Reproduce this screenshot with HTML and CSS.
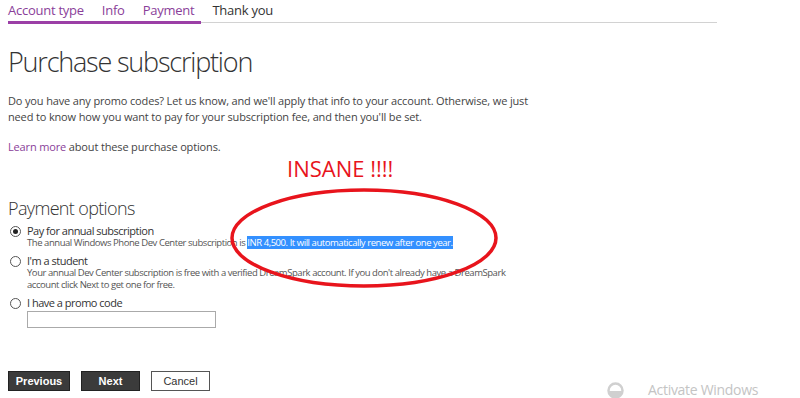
FILE: index.html
```html
<!DOCTYPE html>
<html>
<head>
<meta charset="utf-8">
<link rel="stylesheet" href="styles.css">
</head>
<body>
<div class="page">
  <nav class="tabs">
    <span class="tab done">Account type</span>
    <span class="tab done">Info</span>
    <span class="tab done">Payment</span>
    <span class="tab">Thank you</span>
  </nav>
  <div class="tabline"><div class="tabline-fill"></div></div>

  <h1 class="title">Purchase subscription</h1>
  <p class="intro">Do you have any promo codes? Let us know, and we'll apply that info to your account. Otherwise, we just need to know how you want to pay for your subscription fee, and then you'll be set.</p>
  <p class="learn"><a class="link">Learn more</a> about these purchase options.</p>

  <div class="insane">INSANE !!!!</div>

  <h2 class="subtitle">Payment options</h2>
  <div class="options">
    <div class="option">
      <span class="radio checked"></span>
      <div class="opt-body">
        <div class="opt-label">Pay for annual subscription</div>
        <div class="opt-desc">The annual Windows Phone Dev Center subscription is <span class="sel">INR 4,500. It will automatically renew after one year.</span></div>
      </div>
    </div>
    <div class="option">
      <span class="radio"></span>
      <div class="opt-body">
        <div class="opt-label">I'm a student</div>
        <div class="opt-desc narrow">Your annual Dev Center subscription is free with a verified DreamSpark account. If you don't already have a DreamSpark account click Next to get one for free.</div>
      </div>
    </div>
    <div class="option">
      <span class="radio"></span>
      <div class="opt-body">
        <div class="opt-label">I have a promo code</div>
        <div class="promo"></div>
      </div>
    </div>
  </div>

  <div class="buttons">
    <span class="btn dark">Previous</span>
    <span class="btn dark next">Next</span>
    <span class="btn light">Cancel</span>
  </div>

  <svg class="ellipse" width="280" height="110" viewBox="0 0 280 110">
    <ellipse cx="140" cy="55" rx="132" ry="48" fill="none" stroke="#e8141c" stroke-width="3.5"/>
  </svg>

  <div class="activate">
    <svg class="act-icon" width="17" height="17" viewBox="0 0 17 17">
      <circle cx="8.5" cy="8.5" r="7" fill="none" stroke="#d0d0d0" stroke-width="2.5"/>
      <path d="M2 9 H15 A6.5 6.5 0 0 1 2 9 Z" fill="#d0d0d0"/>
    </svg>
    <span>Activate Windows</span>
  </div>
</div>
</body>
</html>
```

FILE: styles.css
```css
html, body {
  margin: 0;
  padding: 0;
  background: #fff;
}
body {
  width: 800px;
  height: 398px;
  overflow: hidden;
  font-family: "Open Sans", "Noto Sans", sans-serif;
  color: #444;
}
.page {
  position: relative;
  padding: 0 8px;
  height: 398px;
}
.tabs {
  display: flex;
  gap: 18px;
  font-size: 13px;
  letter-spacing: -0.25px;
  line-height: 20px;
  color: #333;
}
.tab.done {
  color: #8a3e99;
}
.tabline {
  margin-top: 2px;
  width: 709px;
  height: 1px;
  background: #d2d2d2;
  position: relative;
}
.tabline-fill {
  position: absolute;
  left: 0;
  top: -1px;
  width: 193px;
  height: 3px;
  background: #9b3fa6;
}
.title {
  margin: 22px 0 0;
  font-weight: 300;
  font-size: 27px;
  line-height: 34px;
  color: #333;
  letter-spacing: -1.2px;
}
.intro {
  margin: 14px 0 0;
  font-size: 11px;
  letter-spacing: -0.15px;
  line-height: 16px;
  width: 528px;
}
.learn {
  margin: 14px 0 0;
  font-size: 11px;
  letter-spacing: -0.15px;
  line-height: 16px;
}
.link {
  color: #8a3e99;
}
.insane {
  margin: 0 0 0 279px;
  font-family: "Open Sans", sans-serif;
  font-size: 22px;
  line-height: 26px;
  color: #e8141c;
}
.subtitle {
  margin: 15px 0 0;
  font-weight: 300;
  font-size: 18px;
  letter-spacing: -0.65px;
  line-height: 24px;
  color: #333;
}
.options {
  display: flex;
  flex-direction: column;
  gap: 6px;
  margin-top: 5px;
}
.option {
  display: flex;
  gap: 6px;
  padding-left: 2px;
}
.radio {
  width: 9px;
  height: 9px;
  border: 1px solid #555;
  border-radius: 50%;
  margin-top: 1px;
  flex: none;
  position: relative;
}
.radio.checked::after {
  content: "";
  position: absolute;
  left: 2px;
  top: 2px;
  width: 5px;
  height: 5px;
  border-radius: 50%;
  background: #222;
}
.opt-label {
  font-size: 11px;
  letter-spacing: -0.5px;
  line-height: 12px;
  color: #333;
}
.opt-desc {
  font-size: 9.5px;
  letter-spacing: -0.45px;
  line-height: 12px;
  color: #555;
}
.opt-desc.narrow {
  width: 500px;
}
.sel {
  background: #3390ff;
  color: #fff;
}
.promo {
  margin-top: 2px;
  width: 187px;
  height: 15px;
  border: 1px solid #aaa;
}
.buttons {
  display: flex;
  gap: 11px;
  margin-top: 43px;
}
.btn {
  font-family: "Liberation Sans", sans-serif;
  font-size: 11px;
  height: 18px;
  line-height: 18px;
  text-align: center;
  border: 1px solid #222;
}
.btn.dark {
  background: #3b3b3b;
  color: #fff;
  font-weight: bold;
  width: 60px;
}
.btn.next {
  width: 57px;
}
.btn.light {
  background: #fff;
  color: #333;
  width: 57px;
  border-color: #555;
}
.ellipse {
  position: absolute;
  left: 224px;
  top: 183px;
}
.activate {
  position: absolute;
  left: 607px;
  top: 380px;
  display: flex;
  align-items: center;
  gap: 24px;
  font-family: "Open Sans", sans-serif;
  font-size: 14px;
  letter-spacing: -0.3px;
  line-height: 20px;
  color: #c4c4c4;
}
```
